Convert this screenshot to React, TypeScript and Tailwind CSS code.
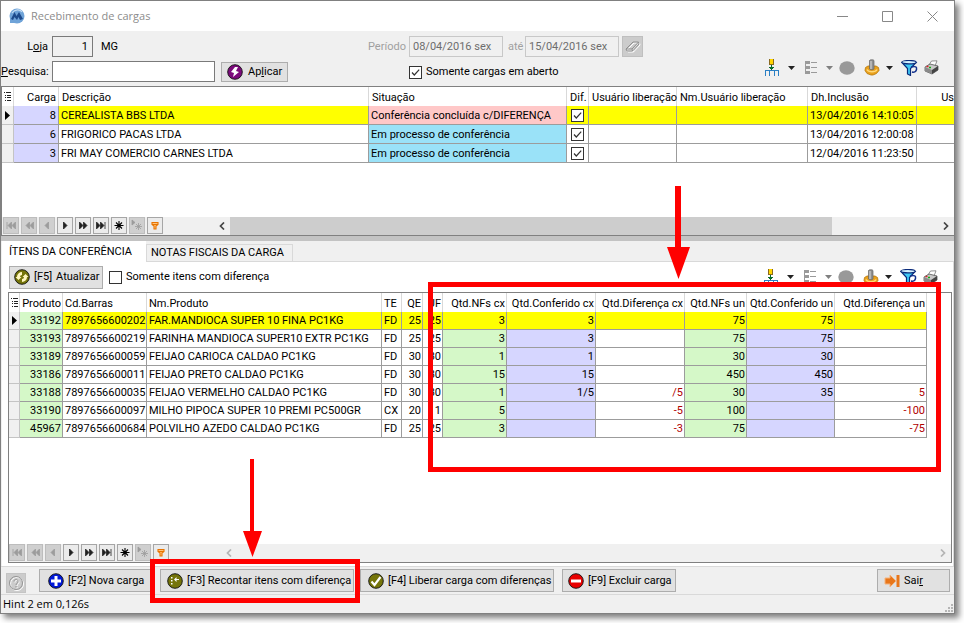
import type { ReactNode } from "react";

const cargas = [
  { carga: 8, descricao: "CEREALISTA BBS LTDA", situacao: "Conferência concluída c/DIFERENÇA", inclusao: "13/04/2016 14:10:05" },
  { carga: 6, descricao: "FRIGORICO PACAS LTDA", situacao: "Em processo de conferência", inclusao: "13/04/2016 12:00:08" },
  { carga: 3, descricao: "FRI MAY COMERCIO CARNES LTDA", situacao: "Em processo de conferência", inclusao: "12/04/2016 11:23:50" },
];

// produto, barras, nome, te, qe, uf, nfs cx, conferido cx, diferença cx, nfs un, conferido un, diferença un
const itens = [
  ["33192", "7897656600202", "FAR.MANDIOCA SUPER 10 FINA PC1KG", "FD", "25", "25", "3", "3", "", "75", "75", ""],
  ["33193", "7897656600219", "FARINHA MANDIOCA SUPER10 EXTR PC1KG", "FD", "25", "25", "3", "3", "", "75", "75", ""],
  ["33189", "7897656600059", "FEIJAO CARIOCA CALDAO PC1KG", "FD", "30", "30", "1", "1", "", "30", "30", ""],
  ["33186", "7897656600011", "FEIJAO PRETO CALDAO PC1KG", "FD", "30", "30", "15", "15", "", "450", "450", ""],
  ["33188", "7897656600035", "FEIJAO VERMELHO CALDAO PC1KG", "FD", "30", "30", "1", "1/5", "/5", "30", "35", "5"],
  ["33190", "7897656600097", "MILHO PIPOCA SUPER 10 PREMI PC500GR", "CX", "20", "1", "5", "", "-5", "100", "", "-100"],
  ["45967", "7897656600684", "POLVILHO AZEDO CALDAO PC1KG", "FD", "25", "25", "3", "", "-3", "75", "", "-75"],
];

const colunas = [
  { titulo: "Produto", largura: "w-[43px]", alinha: "text-right", fundo: "bg-[#d5f8c8]" },
  { titulo: "Cd.Barras", largura: "w-[84px]", alinha: "text-left", fundo: "" },
  { titulo: "Nm.Produto", largura: "w-[235px]", alinha: "text-left", fundo: "" },
  { titulo: "TE", largura: "w-[20px]", alinha: "text-left", fundo: "" },
  { titulo: "QE", largura: "w-[21px]", alinha: "text-right", fundo: "" },
  { titulo: "UF", largura: "w-[20px]", alinha: "text-right", fundo: "" },
  { titulo: "Qtd.NFs cx", largura: "w-[64px]", alinha: "text-right", fundo: "bg-[#d5f8c8]" },
  { titulo: "Qtd.Conferido cx", largura: "w-[89px]", alinha: "text-right", fundo: "bg-[#d6d6ff]" },
  { titulo: "Qtd.Diferença cx", largura: "w-[89px]", alinha: "text-right text-[#b00000]", fundo: "" },
  { titulo: "Qtd.NFs un", largura: "w-[62px]", alinha: "text-right", fundo: "bg-[#d5f8c8]" },
  { titulo: "Qtd.Conferido un", largura: "w-[88px]", alinha: "text-right", fundo: "bg-[#d6d6ff]" },
  { titulo: "Qtd.Diferença un", largura: "w-[92px]", alinha: "text-right text-[#b00000]", fundo: "" },
];

const botao = "flex items-center border border-[#adadad] bg-[#e1e1e1] whitespace-nowrap";

function CheckBox({ id, checked, label }: { id: string; checked?: boolean; label?: string }) {
  return (
    <span className="flex items-center gap-1">
      <span className="relative flex">
        <input
          id={id}
          type="checkbox"
          defaultChecked={checked}
          aria-label={label ? undefined : "Diferença"}
          className="peer size-[13px] appearance-none border border-[#333] bg-white"
        />
        <svg viewBox="0 0 13 13" className="pointer-events-none absolute inset-0 hidden size-[13px] peer-checked:block">
          <path d="M3 6.5 5.3 9 10.2 3.6" fill="none" stroke="#333" strokeWidth="1.2" />
        </svg>
      </span>
      {label && <label htmlFor={id}>{label}</label>}
    </span>
  );
}

function Caret({ apagado }: { apagado?: boolean }) {
  return (
    <svg width="7" height="4" viewBox="0 0 7 4">
      <path d="M0 0h7L3.5 4z" fill={apagado ? "#808080" : "#222"} />
    </svg>
  );
}

function Toolbar() {
  return (
    <div className="flex items-center">
      <button aria-label="Agrupar" className="w-[14px]">
        <svg width="14" height="17" viewBox="0 0 14 17" shapeRendering="crispEdges">
          <path d="M4 0h5v6H4z" fill="#8a6a20" />
          <path d="M5 0h3v5H5z" fill="#ffd400" />
          <path d="M6 6h1v2h2L6.500 11 4 8h2z" fill="#056b2c" />
          <path d="M4 8h5v1H8v1H5V9H4z" fill="#056b2c" />
          <path d="M0 16v-5h4v5M9 16v-5h4v5M4 11h5" fill="none" stroke="#2a7fc4" transform="translate(.5 .5)" />
        </svg>
      </button>
      <button aria-label="Opções de grupo" className="ml-[9px] w-[7px]"><Caret /></button>
      <button aria-label="Lista" className="ml-[10px] w-[12px]">
        <svg width="12" height="14" viewBox="0 0 12 14" shapeRendering="crispEdges">
          <path d="M0 0h5v3H0zM1 5h4v3H1zM1 10h4v3H1zM0 3h1v10H0zM6 1h6v1H6zM6 6h6v1H6zM6 11h6v1H6z" fill="#9a9a9a" />
        </svg>
      </button>
      <button aria-label="Opções de lista" className="ml-[9px] w-[7px]"><Caret apagado /></button>
      <button aria-label="Parar" className="ml-[6px] w-[16px]">
        <svg width="16" height="14" viewBox="0 0 16 14"><ellipse cx="8" cy="7" rx="7.700" ry="6.700" fill="#999" /></svg>
      </button>
      <button aria-label="Ferramentas" className="ml-[9px] w-[16px]">
        <svg width="16" height="17" viewBox="0 0 16 17">
          <path d="M1.500 8.500 4 7h8l2.500 1.500.5 3-2.500 3-3.500 1.500H7l-4-1.500-2-3z" fill="#eaa11c" stroke="#b5770b" strokeWidth=".8" />
          <path d="M3 10.500c1.500 3 8.500 3 10 0" fill="none" stroke="#ffd878" strokeWidth="1.500" />
          <path d="M5.500 1.500C5.500.5 10 .5 10 1.500V10c-1 1-3.500 1-4.500 0z" fill="#8f8f8f" stroke="#666" strokeWidth=".7" />
          <path d="M7 2v8" stroke="#d0d0d0" strokeWidth="1.200" />
        </svg>
      </button>
      <button aria-label="Opções de ferramentas" className="ml-[6px] w-[7px]"><Caret /></button>
      <button aria-label="Filtrar" className="ml-[8px] w-[17px]">
        <svg width="17" height="16" viewBox="0 0 17 16">
          <path d="M1 2.500 6.500 8.500V14l3 1.500V8.500L15 2.500z" fill="#3fc8f5" stroke="#0a2a7a" strokeWidth="1.200" />
          <ellipse cx="8" cy="2.200" rx="7.200" ry="1.700" fill="#d4f2ff" stroke="#0a2a7a" strokeWidth="1.200" />
          <path d="M10 7c5-1 6 0 5.500 2.500S13 12.500 11 12" fill="none" stroke="#12308c" strokeWidth="1.500" />
        </svg>
      </button>
      <button aria-label="Imprimir" className="ml-[6px] w-[15px]">
        <svg width="15" height="15" viewBox="0 0 15 15">
          <path d="m5 5 2.500-4L13 .8 11 6z" fill="#fff" stroke="#777" strokeWidth=".8" />
          <path d="m1 7 5-3 8 2v4l-6 4-7-3z" fill="#c9c9c9" stroke="#555" strokeWidth=".8" />
          <path d="m8 10 6-4v4l-6 4z" fill="#444" />
          <path d="M1 7l7 3v4l-7-3z" fill="#8a8a8a" />
          <path d="M2.500 6.500h2" stroke="#d22" strokeWidth="1.400" />
          <path d="M5 7.500h2" stroke="#1a1" strokeWidth="1.400" />
        </svg>
      </button>
    </div>
  );
}

const navegacao = [
  { nome: "Primeiro", ativo: false, icone: <path d="M4 5v7M8.500 5v7M8 5.500 5 8.500l3 3zM12 5.500l-3 3 3 3zM12.500 5v7" /> },
  { nome: "Página anterior", ativo: false, icone: <path d="M8 5.500 5 8.500l3 3zM12 5.500l-3 3 3 3zM12.500 5v7M8.500 5v7" /> },
  { nome: "Anterior", ativo: false, icone: <path d="m9.500 5-3.500 3.500L9.500 12z" /> },
  { nome: "Próximo", ativo: true, icone: <path d="m6.500 5 3.500 3.500L6.500 12z" /> },
  { nome: "Próxima página", ativo: true, icone: <path d="m5 5.500 3 3-3 3zM9 5.500l3 3-3 3zM4.500 5v7M8.500 5v7" /> },
  { nome: "Último", ativo: true, icone: <path d="m4 5.500 3 3-3 3zM8 5.500l3 3-3 3zM3.500 5v7M7.500 5v7M12 5v7" /> },
  { nome: "Inserir", ativo: true, icone: <path d="M8 4v9M3.500 8.500h9M5 5.500l6 6M11 5.500l-6 6" stroke="#000" strokeWidth="1.1" /> },
  { nome: "Editar", ativo: false, icone: <path d="M3 3v5l3-2.500zM9.500 6v7M6 9.500h7M7 7l5 5M12 7l-5 5" /> },
  { nome: "Filtro", ativo: true, icone: <path d="M5 5.500h6v2L9 9v3H7V9L5 7.500zM5 7.500h6" fill="#ffc27a" stroke="#e87400" strokeWidth="1.1" /> },
];

function Navigator({ id, thumb }: { id: string; thumb?: boolean }) {
  return (
    <div className="flex h-[18px] shrink-0 bg-[#f0f0f0]">
      <div className={`flex w-[212px] shrink-0 gap-[2px] ${thumb ? "pl-px" : ""}`}>
        {navegacao.map((n) => (
          <button
            key={n.nome}
            aria-label={n.nome}
            disabled={!n.ativo}
            className={`h-[17px] w-[16px] border ${n.ativo ? "border-[#a6a6a6] bg-[#ebebeb]" : "border-[#bdbdbd] bg-[#cfcfcf]"}`}
          >
            <svg width="14" height="15" viewBox="1 1 14 15" fill={n.ativo ? "#222" : "#9c9c9c"} stroke={n.ativo ? "#222" : "#9c9c9c"} strokeWidth=".8">
              {n.icone}
            </svg>
          </button>
        ))}
      </div>
      <div className="flex flex-1 items-center">
        <button aria-label={`Rolar ${id} para a esquerda`} className="flex w-[16px] justify-center">
          <svg width="6" height="8" viewBox="0 0 6 8"><path d="M5 .5 1.500 4 5 7.500" fill="none" stroke={thumb ? "#444" : "#b4b4b4"} strokeWidth="1.700" /></svg>
        </button>
        <div className="h-full flex-1">{thumb && <div className="h-full w-[85%] bg-[#cdcdcd]" />}</div>
        <button aria-label={`Rolar ${id} para a direita`} className="flex w-[16px] justify-center">
          <svg width="6" height="8" viewBox="0 0 6 8"><path d="M1 .5 4.500 4 1 7.500" fill="none" stroke={thumb ? "#444" : "#b4b4b4"} strokeWidth="1.700" /></svg>
        </button>
      </div>
    </div>
  );
}

function ListMark() {
  return (
    <svg width="7" height="9" viewBox="0 0 7 9" className="mx-auto" shapeRendering="crispEdges">
      <path d="M0 0h1v1H0zM2 0h5v1H2zM1 3h1v1H1zM3 3h4v1H3zM1 5h1v1H1zM3 5h4v1H3zM1 8h1v1H1zM3 8h4v1H3z" fill="#222" />
    </svg>
  );
}

function RowMark() {
  return (
    <svg width="5" height="9" viewBox="0 0 5 9" className="ml-[3px]"><path d="M0 0v9l5-4.500z" fill="#000" /></svg>
  );
}

function RoundIcon({ cor, children }: { cor: string; children: ReactNode }) {
  return (
    <svg width="16" height="16" viewBox="0 0 16 16" className="shrink-0">
      <circle cx="8" cy="8" r="7.300" fill={cor} stroke="#111" strokeWidth=".9" />
      {children}
    </svg>
  );
}

function CargasTable() {
  const th = "border-r border-[#d9d9d9] font-normal px-[3px] pt-[2px] text-left";
  const td = "border-r border-b border-[#9c9c9c] px-[2px] pt-[2px]";
  return (
    <table className="w-full table-fixed border-separate border-spacing-0 whitespace-nowrap">
      <colgroup>
        <col className="w-[12px]" />
        <col className="w-[45px]" />
        <col className="w-[310px]" />
        <col className="w-[198px]" />
        <col className="w-[22px]" />
        <col className="w-[88px]" />
        <col className="w-[131px]" />
        <col className="w-[109px]" />
        <col />
      </colgroup>
      <thead>
        <tr className="h-[19px]">
          <th className="border-r border-[#d9d9d9] p-0"><ListMark /></th>
          <th className="border-r border-[#d9d9d9] px-[2px] pt-[2px] text-right font-normal">Carga</th>
          <th className={th}>Descrição</th>
          <th className={th}>Situação</th>
          <th className={th}>Dif.</th>
          <th className={th}>Usuário liberação</th>
          <th className={th}>Nm.Usuário liberação</th>
          <th className={th}>Dh.Inclusão</th>
          <th className="pt-[2px] text-right font-normal">Us</th>
        </tr>
      </thead>
      <tbody>
        {cargas.map((c, i) => {
          const fundo = i === 0 ? "bg-[#ffff00]" : "";
          return (
            <tr key={c.carga} className="h-[19px]">
              <td className="border-r border-b border-[#c4c4c4] bg-[#f0f0f0] p-0">{i === 0 && <RowMark />}</td>
              <td className={`${td} bg-[#d6d6ff] text-right`}>{c.carga}</td>
              <td className={`${td} ${fundo}`}>{c.descricao}</td>
              <td className={`${td} ${i === 0 ? "bg-[#ffc8c8]" : "bg-[#9ae2f8]"}`}>{c.situacao}</td>
              <td className={`border-r border-b border-[#9c9c9c] p-0 ${fundo}`}>
                <div className="flex justify-center"><CheckBox id={`dif-${c.carga}`} checked /></div>
              </td>
              <td className={`${td} ${fundo}`}></td>
              <td className={`${td} ${fundo}`}></td>
              <td className={`${td} ${fundo}`}>{c.inclusao}</td>
              <td className={`border-b border-[#9c9c9c] ${fundo}`}></td>
            </tr>
          );
        })}
      </tbody>
    </table>
  );
}

function ItensTable() {
  return (
    <table className="w-[918px] table-fixed border-separate border-spacing-0 whitespace-nowrap">
      <colgroup>
        <col className="w-[11px]" />
        {colunas.map((c) => (
          <col key={c.titulo} className={c.largura} />
        ))}
      </colgroup>
      <thead>
        <tr className="h-[19px]">
          <th className="border-r border-[#d9d9d9] p-0"><ListMark /></th>
          {colunas.map((c) => (
            <th key={c.titulo} className={`border-r border-[#d9d9d9] pt-[2px] pr-px pl-[2px] font-normal ${c.alinha} !text-black`}>{c.titulo}</th>
          ))}
        </tr>
      </thead>
      <tbody>
        {itens.map((item, i) => (
          <tr key={item[0]} className="h-[18px]">
            <td className="border-r border-b border-[#c4c4c4] bg-[#f0f0f0] p-0">{i === 0 && <RowMark />}</td>
            {item.map((valor, j) => (
              <td
                key={j}
                className={`border-r border-b border-[#9c9c9c] pt-px pr-px pl-[2px] ${colunas[j].alinha} ${i === 0 && j > 0 ? "bg-[#ffff00]" : colunas[j].fundo}`}
              >
                {valor}
              </td>
            ))}
          </tr>
        ))}
      </tbody>
    </table>
  );
}

function Anotacoes() {
  return (
    <div className="pointer-events-none">
      <div className="absolute top-[281px] left-[427px] h-[190px] w-[513px] border-5 border-[#ff0000]" />
      <div className="absolute top-[558px] left-[149px] h-[44px] w-[210px] border-5 border-[#ff0000]" />
      <svg className="absolute top-[185px] left-[666px]" width="23" height="93" viewBox="0 0 23 93">
        <path d="M8 0h6v61h9L11.500 93 0 61h8z" fill="#ff0000" />
      </svg>
      <svg className="absolute top-[458px] left-[242px]" width="19" height="98" viewBox="0 0 19 98">
        <path d="M7 0h4v72h8L9.500 98 0 72h7z" fill="#ff0000" />
      </svg>
    </div>
  );
}

export default function App() {
  return (
    <div className="flex min-h-screen bg-white pr-[9px] pb-[9px] font-[Roboto,'Liberation_Sans',sans-serif] text-[11px] leading-[16px] text-black">
      <div className="relative flex flex-1 flex-col border border-[#808080] bg-[#f0f0f0] shadow-[4px_4px_6px_rgba(0,0,0,0.5)]">
        <header className="flex h-[30px] shrink-0 items-center bg-white pl-2">
          <svg width="16" height="16" viewBox="0 0 16 16">
            <circle cx="8" cy="8" r="7.500" fill="#6fa3d8" />
            <path d="M1 15V9l7 6z" fill="#6fa3d8" />
            <path d="M2 11 5.500 4l2 4L10 4l4 7-3 1-1.500-3L8 12l-2.500-3L4 12z" fill="#1d4a8c" />
            <path d="M3 5c3-4 8-4 10-1" fill="none" stroke="#c5dcf2" strokeWidth="1.200" />
          </svg>
          <h1 className="ml-[6px] font-['Open_Sans',sans-serif] text-[11px] text-[#8c8c8c]">Recebimento de cargas</h1>
          <div className="ml-auto flex items-center gap-[34px] pr-4 text-[#888]">
            <button aria-label="Minimizar"><svg width="11" height="11" viewBox="0 0 11 11"><path d="M0 5.500h11" stroke="currentColor" /></svg></button>
            <button aria-label="Maximizar"><svg width="11" height="11" viewBox="0 0 11 11"><path d="M.5.5h10v10H.5z" fill="none" stroke="currentColor" /></svg></button>
            <button aria-label="Fechar"><svg width="11" height="11" viewBox="0 0 11 11"><path d="m.5.5 10 10M10.500.5l-10 10" stroke="currentColor" /></svg></button>
          </div>
        </header>

        <section className="flex h-[55px] shrink-0">
          <div className="flex w-[367px] flex-col gap-1 pt-[5px]">
            <div className="flex items-center">
              <label htmlFor="loja" className="w-[51px] pr-1 text-right">L<u>o</u>ja</label>
              <input id="loja" defaultValue="1" className="h-[21px] w-[41px] border border-[#7a7a7a] bg-[#f0f0f0] px-1 text-right" />
              <span className="ml-2">MG</span>
            </div>
            <div className="flex items-center">
              <label htmlFor="pesquisa" className="w-[51px]"><u>P</u>esquisa:</label>
              <input id="pesquisa" className="h-[21px] w-[163px] border border-[#7a7a7a] bg-white px-1" />
              <button className={`${botao} ml-[6px] h-[20px] w-[67px] gap-[5px] pl-[5px]`}>
                <RoundIcon cor="#7b0a7b"><path d="m8 3-4 5 3 1-1 4 6-5-3-1 2-4z" fill="#fff" /></RoundIcon>
                <span>Ap<u>l</u>icar</span>
              </button>
            </div>
          </div>
          <div className="flex flex-col gap-[7px] pt-[5px]">
            <div className="flex items-center text-[#a0a0a0]">
              <label htmlFor="de" className="w-[41px]">Período</label>
              <input id="de" disabled defaultValue="08/04/2016 sex" className="h-[21px] w-[94px] border border-[#c8c8c8] px-[3px] text-[#6d6d6d]" />
              <label htmlFor="ate" className="w-[22px] pl-[5px]">até</label>
              <input id="ate" disabled defaultValue="15/04/2016 sex" className="h-[21px] w-[94px] border border-[#c8c8c8] px-[3px] text-[#6d6d6d]" />
              <button disabled aria-label="Limpar período" className="ml-[3px] flex size-[21px] items-center justify-center border border-[#bfbfbf] bg-[#cccccc]">
                <svg width="17" height="13" viewBox="0 0 17 13">
                  <path d="M2 9 9 2h5.500L15 4l-6.500 7H3zM2 9h6l6.500-7M8 9l.5 2" fill="none" stroke="#fff" transform="translate(1 1)" />
                  <path d="M2 9 9 2h5.500L15 4l-6.500 7H3zM2 9h6l6.500-7M8 9l.5 2" fill="none" stroke="#8f8f8f" />
                </svg>
              </button>
            </div>
            <div className="pl-[41px]"><CheckBox id="abertas" checked label="Somente cargas em aberto" /></div>
          </div>
          <div className="ml-auto self-end pr-[15px] pb-[10px]"><Toolbar /></div>
        </section>

        <section className="flex min-h-[150px] flex-col border-t border-b border-l border-[#808080] bg-white">
          <CargasTable />
          <div className="flex-1" />
          <Navigator id="cargas" thumb />
        </section>

        <div className="h-[5px] shrink-0 bg-[#c3c3c3]" />

        <main className="flex flex-1 flex-col pl-px">
          <div role="tablist" className="flex h-[21px] shrink-0 items-end">
            <button role="tab" aria-selected="true" className="h-[21px] w-[144px] bg-white pl-[7px] text-left whitespace-nowrap">ÍTENS DA CONFERÊNCIA</button>
            <button role="tab" aria-selected="false" className="h-[18px] w-[147px] border border-[#d9d9d9] bg-[#f0f0f0] pl-1 text-left whitespace-nowrap">NOTAS FISCAIS DA CARGA</button>
            <div className="flex-1 self-stretch border-b border-[#d9d9d9]" />
          </div>
          <div className="flex flex-1 flex-col border-r border-[#d9d9d9] bg-white pr-px pl-[6px]">
            <div className="flex h-[30px] shrink-0 items-center pr-[14px] pl-px">
              <button className={`${botao} h-[23px] w-[94px] gap-[4px] pl-[4px]`}>
                <RoundIcon cor="#75750a">
                  <path d="M8 3a5 5 0 0 0-5 5H1.500L4.500 11l3-3H6a2 2 0 0 1 2-2zM8 13a5 5 0 0 0 5-5h1.500L11.500 5l-3 3H10a2 2 0 0 1-2 2z" fill="#fff6c0" />
                </RoundIcon>
                <span>[F5]</span>
                <span>Atualizar</span>
              </button>
              <div className="ml-[6px]"><CheckBox id="dif" label="Somente itens com diferença" /></div>
              <div className="ml-auto"><Toolbar /></div>
            </div>
            <div className="mb-[3px] flex flex-1 flex-col border border-[#808080]">
              <ItensTable />
              <div className="flex-1" />
              <Navigator id="itens" />
            </div>
          </div>
        </main>

        <div className="flex h-[29px] shrink-0 items-center border-t border-b border-[#d9d9d9] pr-[4px] pl-[5px]">
          <button disabled aria-label="Ajuda" className="mt-[5px] flex size-[20px] items-center justify-center border border-[#c4c4c4] bg-[#cccccc]">
            <svg width="17" height="17" viewBox="0 0 17 17" fill="none">
              <g stroke="#fff" transform="translate(1 1)"><circle cx="8" cy="8" r="6.500" /><path d="M6 6.500c0-3 4-3 4 0 0 2-2 1.500-2 3.500M8 11v1.500" /></g>
              <g stroke="#949494"><circle cx="8" cy="8" r="6.500" /><path d="M6 6.500c0-3 4-3 4 0 0 2-2 1.500-2 3.500M8 11v1.500" /></g>
            </svg>
          </button>
          <button className={`${botao} ml-[13px] h-[23px] w-[113px] gap-[4px] pl-[8px]`}>
            <RoundIcon cor="#0018d8"><path d="M6.500 3h3v3.500H13v3H9.500V13h-3V9.500H3v-3h3.500z" fill="#fff" /></RoundIcon>
            [F2] Nova carga
          </button>
          <button className={`${botao} ml-[8px] h-[23px] w-[194px] gap-[4px] pl-[6px]`}>
            <RoundIcon cor="#75750a">
              <path d="M4 4h1.500v1.500H4zM4 7h1.500v1.500H4zM4 10h1.500v1.500H4z" fill="#fff" />
              <path d="M7 6.500 9.500 4v2H12v1H9.500v2z" fill="#fff" />
            </RoundIcon>
            [F3] Recontar itens com diferença
          </button>
          <button className={`${botao} ml-[6px] h-[23px] w-[194px] gap-[4px] pl-[7px]`}>
            <RoundIcon cor="#75750a"><path d="m3.500 8.500 3 3.500 6-8" fill="none" stroke="#fff" strokeWidth="2.200" /></RoundIcon>
            [F4] Liberar carga com diferenças
          </button>
          <button className={`${botao} ml-[8px] h-[23px] w-[114px] gap-[4px] pl-[5px]`}>
            <RoundIcon cor="#e80000"><path d="M3 6.500h10v3H3z" fill="#fff" /></RoundIcon>
            [F9] Excluir carga
          </button>
          <button className={`${botao} ml-auto h-[23px] w-[73px] gap-[4px] pl-[6px]`}>
            <svg width="16" height="14" viewBox="0 0 16 14">
              <path d="M1 4h5V1l6 6-6 6v-3H1z" fill="#e8761a" stroke="#f5b27a" />
              <path d="M12.500 1h3v12h-3z" fill="#e8761a" />
            </svg>
            <span>Sai<u>r</u></span>
          </button>
        </div>

        <footer className="flex h-[18px] shrink-0 items-center justify-between pl-[2px] font-['Open_Sans',sans-serif] text-[11px]">
          Hint 2 em 0,126s
          <svg width="9" height="9" viewBox="0 0 9 9" className="self-end" shapeRendering="crispEdges">
            <path d="M6 0h2v2H6zM3 3h2v2H3zM6 3h2v2H6zM0 6h2v2H0zM3 6h2v2H3zM6 6h2v2H6z" fill="#b5b5b5" />
          </svg>
        </footer>
        <Anotacoes />
      </div>
    </div>
  );
}
